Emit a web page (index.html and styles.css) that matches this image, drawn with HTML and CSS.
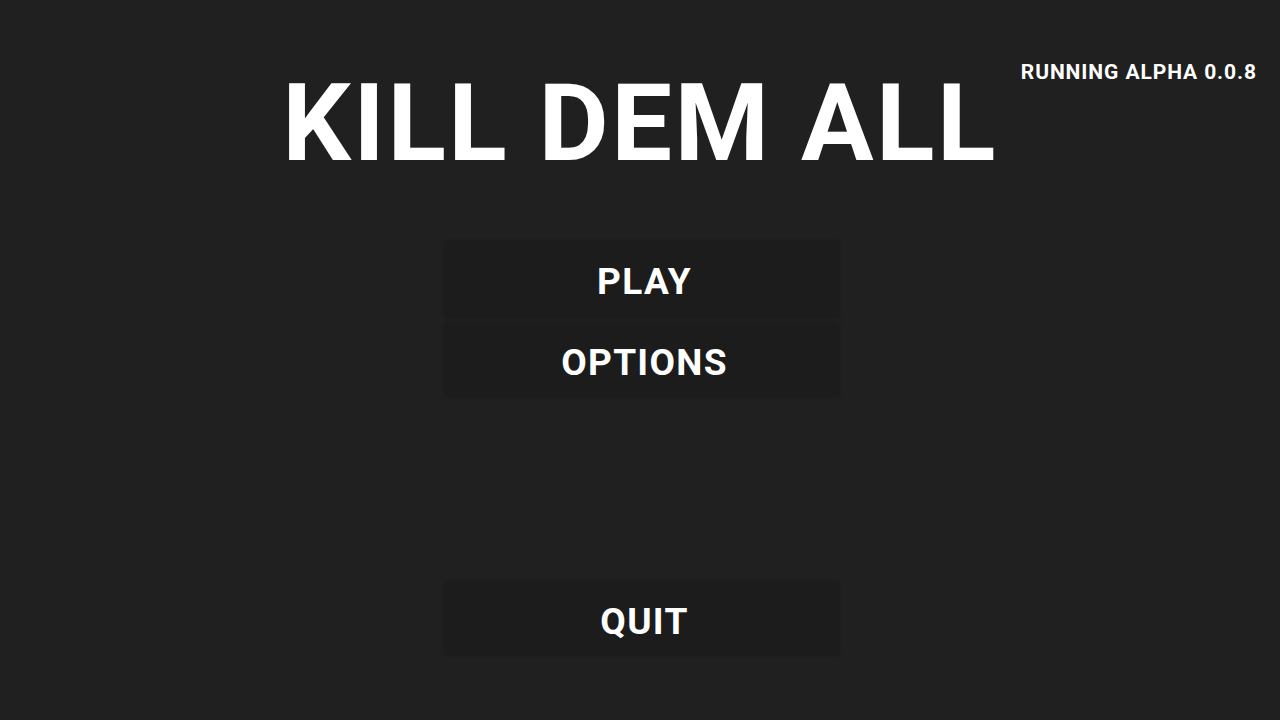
FILE: index.html
```html
<!DOCTYPE html>
<html>
<head>
<meta charset="utf-8">
<link rel="stylesheet" href="styles.css">
</head>
<body>
<div class="screen">
  <div class="version">RUNNING ALPHA 0.0.8</div>
  <h1 class="title">KILL DEM ALL</h1>
  <div class="menu">
    <div class="btn btn-play">PLAY</div>
    <div class="btn">OPTIONS</div>
    <div class="spacer"></div>
    <div class="btn">QUIT</div>
  </div>
</div>
</body>
</html>
```
FILE: styles.css
```css
html, body {
  margin: 0;
  padding: 0;
  background: #202020;
}
.screen {
  position: relative;
  width: 1280px;
  height: 720px;
  font-family: Roboto, "Liberation Sans", sans-serif;
  color: #ffffff;
  display: flex;
  flex-direction: column;
  align-items: center;
}
.version {
  position: absolute;
  top: 60px;
  right: 23px;
  font-size: 21px;
  font-weight: 700;
  letter-spacing: 0.9px;
}
.title {
  margin: 69px 0 0 0;
  font-size: 108px;
  font-weight: 700;
  line-height: 108px;
  letter-spacing: 2.5px;
}
.menu {
  margin-top: 63px;
  width: 396px;
  margin-left: 3px;
  display: flex;
  flex-direction: column;
  gap: 5px;
}
.btn {
  height: 74px;
  padding-top: 4px;
  padding-left: 6px;
  box-sizing: border-box;
  background: #1c1c1c;
  border-radius: 6px;
  box-shadow: 0 0 2px 1px rgba(28, 28, 28, 0.5);
  display: flex;
  align-items: center;
  justify-content: center;
  font-size: 37px;
  font-weight: 700;
  letter-spacing: 1.3px;
}
.btn-play {
  height: 78px;
}
.spacer {
  height: 175px;
}
```
